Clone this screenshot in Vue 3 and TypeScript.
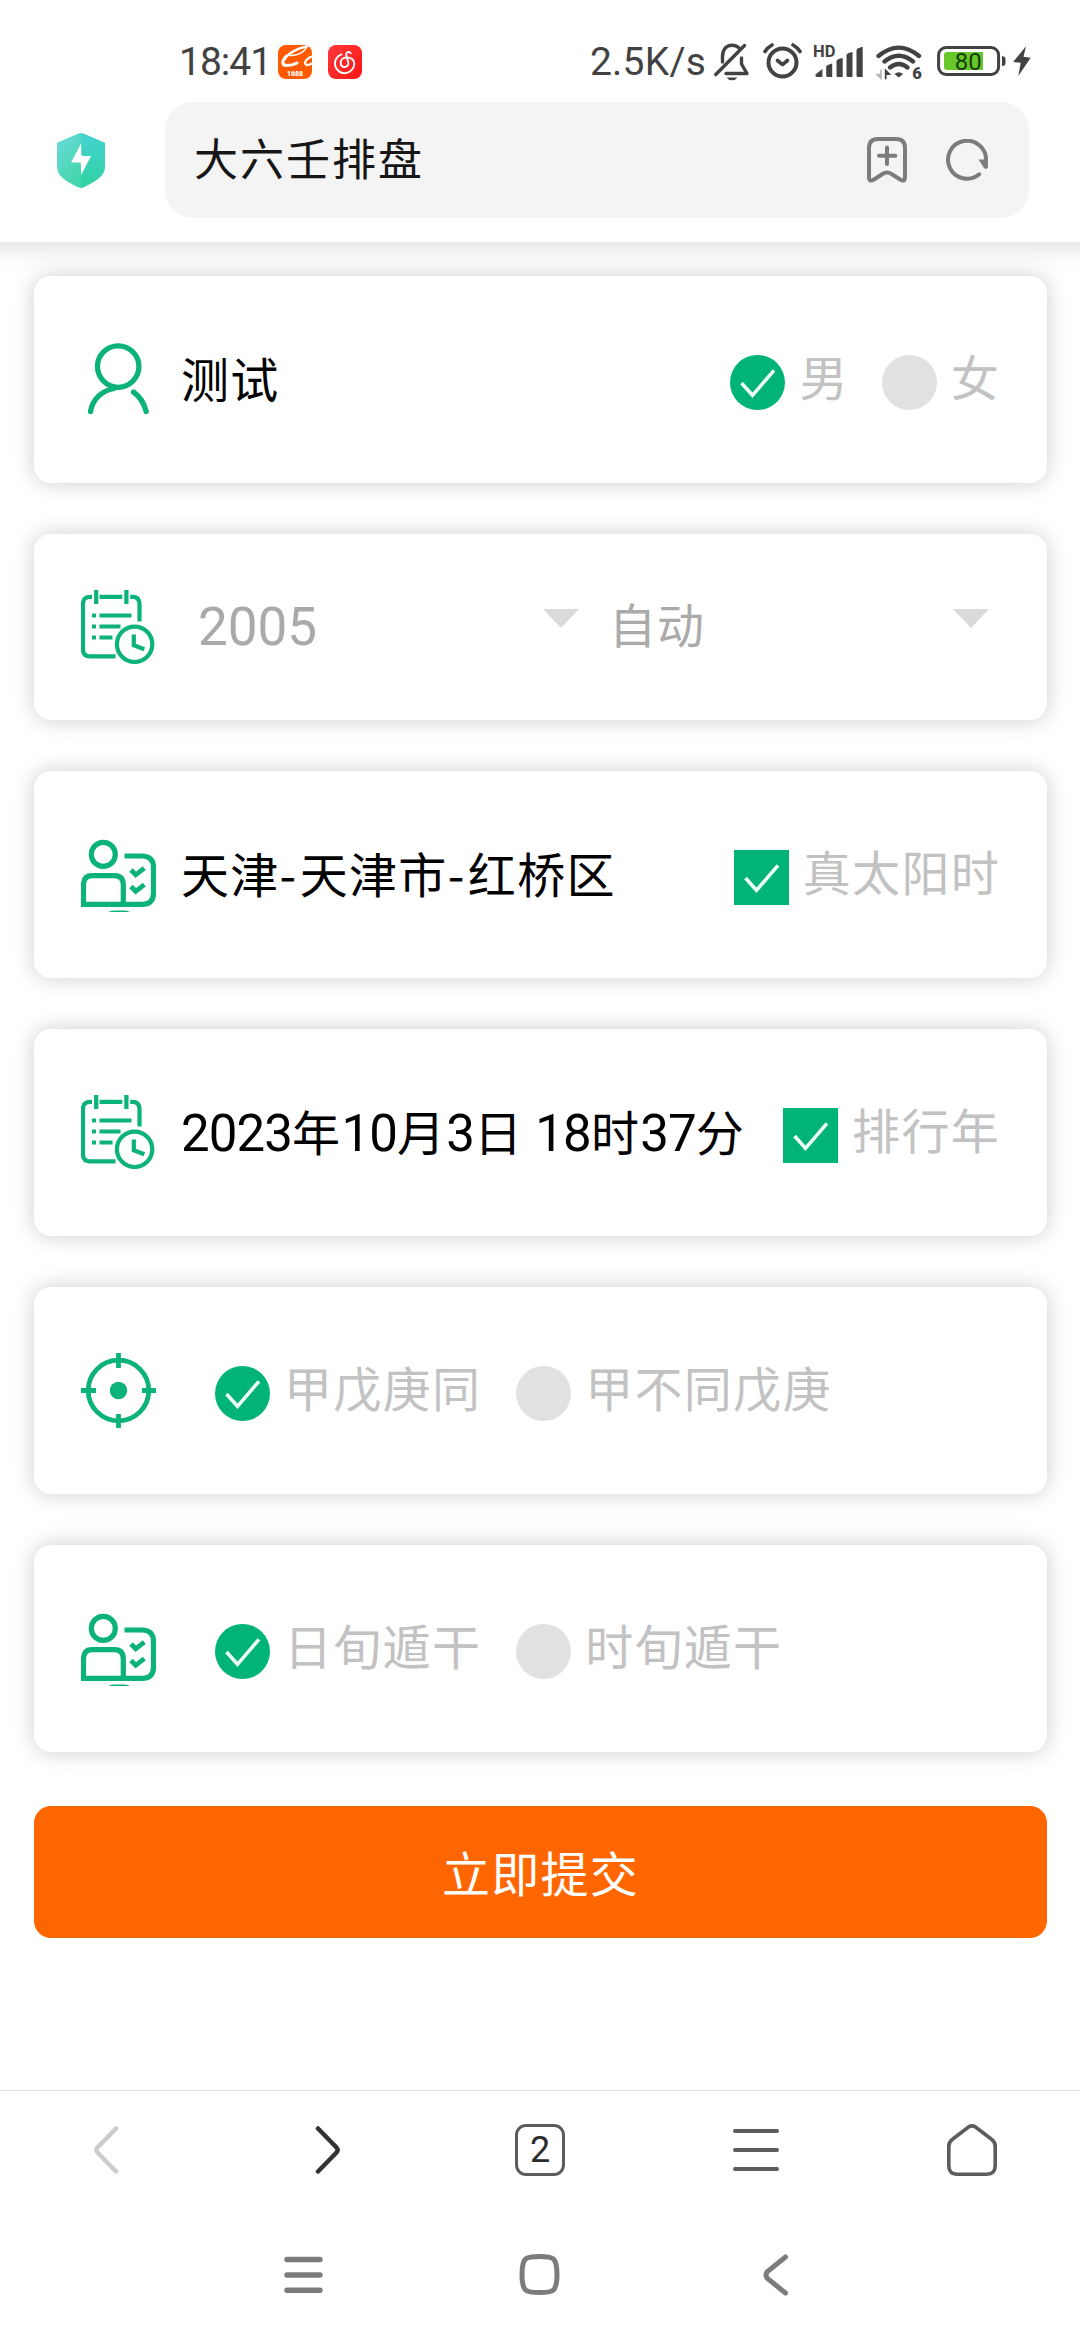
<script setup lang="ts">
import { ref } from 'vue'

type IconName = 'person' | 'calendar' | 'profile' | 'target'

interface Choice {
  label: string
  shape: 'round' | 'square'
  checked: boolean
}

interface Row {
  icon: IconName
  kind: 'value' | 'selects' | 'radios'
  value?: string
  choices: Choice[]
}

const rows = ref<Row[]>([
  {
    icon: 'person',
    kind: 'value',
    value: '测试',
    choices: [
      { label: '男', shape: 'round', checked: true },
      { label: '女', shape: 'round', checked: false },
    ],
  },
  { icon: 'calendar', kind: 'selects', choices: [] },
  {
    icon: 'profile',
    kind: 'value',
    value: '天津-天津市-红桥区',
    choices: [{ label: '真太阳时', shape: 'square', checked: true }],
  },
  {
    icon: 'calendar',
    kind: 'value',
    value: '2023年10月3日 18时37分',
    choices: [{ label: '排行年', shape: 'square', checked: true }],
  },
  {
    icon: 'target',
    kind: 'radios',
    choices: [
      { label: '甲戊庚同', shape: 'round', checked: true },
      { label: '甲不同戊庚', shape: 'round', checked: false },
    ],
  },
  {
    icon: 'profile',
    kind: 'radios',
    choices: [
      { label: '日旬遁干', shape: 'round', checked: true },
      { label: '时旬遁干', shape: 'round', checked: false },
    ],
  },
])

// Digits and hyphens are set in a Latin face, so a value is split into runs.
const runs = (value: string) =>
  (value.match(/[0-9]+|-|[^0-9-]+/g) ?? []).map((text) => ({
    text,
    digits: /^[0-9]/.test(text),
    hyphen: text === '-',
  }))

function pick(row: Row, choice: Choice) {
  if (choice.shape === 'square') {
    choice.checked = !choice.checked
    return
  }
  row.choices.forEach((c) => (c.checked = c === choice))
}
</script>

<template>
  <div class="screen">
    <header class="header">
      <div class="status">
        <div class="status-left">
          <span class="time">18:41</span>
          <svg class="app-1688" width="34" height="34" viewBox="0 0 34 34">
            <rect width="34" height="34" rx="8" fill="#ff5a00" />
            <path d="M29 1.5C20 2.500 9 9 6 15" fill="none" stroke="#fff" stroke-width="2.400" stroke-linecap="round" />
            <path d="M8.500 11C3.500 16 3.500 20.500 9 20.500C13 20.500 16.500 19.500 19 18" fill="none" stroke="#fff" stroke-width="3" stroke-linecap="round" />
            <path d="M12 10.500C18 11 26 8 28.500 2" fill="none" stroke="#fff" stroke-width="1.500" stroke-linecap="round" />
            <path d="M34 11.500C30 12.500 26 16.500 27.500 19C28.500 21 32 20 34 18" fill="none" stroke="#fff" stroke-width="2.200" />
            <text x="17" y="30.500" text-anchor="middle" font-size="7" font-weight="900" fill="#fff" font-family="Roboto, sans-serif">1688</text>
          </svg>
          <svg width="34" height="34" viewBox="0 0 34 34">
            <defs>
              <linearGradient id="music" x1="0" y1="0" x2="1" y2="1">
                <stop offset="0" stop-color="#fb3a3a" />
                <stop offset="1" stop-color="#ff1414" />
              </linearGradient>
            </defs>
            <rect width="34" height="34" rx="8" fill="url(#music)" />
            <path d="M13.500 9.300A9.700 9.700 0 1 0 26.300 18.500C26.300 14.500 22.500 12.200 18.500 12.400C14.800 12.600 12.700 15.300 12.700 18C12.700 20.500 14.500 22 16.700 22C19.300 22 20.800 20 20.300 17.500L18.200 10C17.800 7.300 20.200 6 22.800 8.200" fill="none" stroke="#fff" stroke-width="1.900" stroke-linecap="round" />
          </svg>
        </div>
        <div class="status-right">
          <span class="speed">2.5K/s</span>
          <svg class="s-bell" width="36" height="38" viewBox="0 0 36 38" fill="none" stroke="#424242" stroke-width="3.400" stroke-linecap="round" stroke-linejoin="round">
            <path d="M8.500 19V13.500C8.500 6.500 12.500 2.200 18 2.200C20.500 2.200 23 3 24.800 4.800" />
            <path d="M1.800 31.500L30.500 2.500" />
            <path d="M27.500 15V21L33 30.500H12" />
            <path d="M12.500 34.500H23.500Q21.500 37.300 18 37.300T12.500 34.500Z" fill="#424242" stroke="none" />
          </svg>
          <svg class="s-alarm" width="40" height="38" viewBox="0 0 40 38" fill="none" stroke="#424242" stroke-width="4" stroke-linecap="round" stroke-linejoin="round">
            <circle cx="19.500" cy="19.500" r="14" />
            <path d="M2 8.500Q4.500 4.500 9 2M37 8.500Q34.500 4.500 30 2" stroke-width="3.600" />
            <path d="M14.500 17.500L19.500 21.700L24.500 17.500" stroke-width="3.600" />
          </svg>
          <svg class="s-signal" width="51" height="42" viewBox="0 -2 51 42" fill="#424242">
            <text x="0" y="14.200" font-size="16.500" font-weight="700" font-family="Roboto, sans-serif">HD</text>
            <path d="M2.500 31.500L9.400 26V34H4Q2.500 34 2.500 32.500ZM13.200 23.500Q13.500 22 19.200 20.500V34H14.700Q13.200 34 13.200 32.500ZM23.500 18Q24 16 29.700 15V34H25Q23.500 34 23.500 32.500ZM33.500 12Q34 10 39.500 9V34H35Q33.500 34 33.500 32.500ZM43.500 7Q44 5 49.700 3.800V34H45Q43.500 34 43.500 32.500Z" />
          </svg>
          <svg class="s-wifi" width="48" height="46" viewBox="0 -4 48 46" fill="none" stroke="#424242" stroke-width="4.300" stroke-linecap="round">
            <path d="M2.500 13Q22.800 -3.800 43 13M8.500 18.500Q22.800 7 37 18.500M14 24.500Q22.800 17.500 31.500 24.500" />
            <path d="M18.500 31Q22.800 27.500 27 31L22.800 34.500Z" fill="#424242" stroke="none" />
            <path d="M5 27V35.500L.8 31.500H4" stroke="#b5b5b5" stroke-width="1.500" fill="#b5b5b5" />
            <path d="M9.700 35.500V27.500L13.200 31H10" stroke-width="1.800" fill="#424242" />
            <text x="36.300" y="36" font-size="16.500" font-weight="900" font-family="Roboto, sans-serif" fill="#424242" stroke="none">6</text>
          </svg>
          <svg class="s-battery" width="95" height="38" viewBox="0 0 95 38">
            <rect x="1.600" y="4.500" width="60" height="27" rx="7.500" fill="none" stroke="#424242" stroke-width="3" />
            <path d="M65 13Q68.500 13.500 68.500 16V20.500Q68.500 22.500 65 23Z" fill="#424242" />
            <path d="M10 9H46V27H10Q7 27 7 24V12Q7 9 10 9Z" fill="#66c82a" />
            <text x="31.200" y="26.500" text-anchor="middle" font-size="24" font-family="Roboto, sans-serif" fill="#173d06">80</text>
            <path d="M89 3.300L76.100 19L83.700 19.700L81.300 33L93.700 14.700L86.500 13.700Z" fill="#424242" />
          </svg>
        </div>
      </div>
      <div class="toolbar">
        <svg class="shield" width="48" height="55" viewBox="0 0 48 55">
          <defs>
            <linearGradient id="shieldLeft" x1="0" y1="0" x2="0.500" y2="1">
              <stop offset="0" stop-color="#6bdcdb" />
              <stop offset="1" stop-color="#45d5ac" />
            </linearGradient>
            <linearGradient id="shieldRight" x1="0" y1="0" x2="0" y2="1">
              <stop offset="0" stop-color="#45d3d3" />
              <stop offset="1" stop-color="#2fd2a0" />
            </linearGradient>
          </defs>
          <path d="M24 0Q22.500 0 21 .8L0 9.700V33.500C0 44 11 49 21 54.200Q22.500 55 24 55Z" fill="url(#shieldLeft)" />
          <path d="M24 0Q25.500 0 27 .8L48 9.700V33.500C48 44 37 49 27 54.200Q25.500 55 24 55Z" fill="url(#shieldRight)" />
          <path d="M24.200 10.300L14 29.500H23.700L24.200 42L34 23H26L24.200 22Z" fill="#fff" />
        </svg>
        <div class="address">
          <span class="title">大六壬排盘</span>
          <svg class="bookmark" width="40" height="46" viewBox="0 0 40 46" fill="none" stroke="#7c7c7c" stroke-width="4" stroke-linecap="round" stroke-linejoin="round">
            <path d="M2 40V11Q2 2 11 2H29Q38 2 38 11V40Q38 45.500 33.200 42.500L24.500 37Q20 34 15.500 37L7 42.500Q2 45.500 2 40Z" />
            <path d="M20 10.500V27M12 18.700H28.300" />
          </svg>
          <svg width="43" height="43" viewBox="0 0 43 43">
            <path d="M33.200 35.300A19 19 0 1 1 40 22" fill="none" stroke="#7c7c7c" stroke-width="4" stroke-linecap="round" />
            <path d="M32.500 20.500H42V28Q40.500 31.500 38 29Z" fill="#7c7c7c" />
          </svg>
        </div>
      </div>
    </header>

    <main class="form">
      <section v-for="(row, i) in rows" :key="i" class="card" :class="`card-${row.kind}`">
        <svg class="icon" width="75" height="75" viewBox="0 0 75 75" fill="none" stroke="#0bb27a" stroke-linecap="round">
          <g v-if="row.icon === 'person'" stroke-width="5.300">
            <circle cx="37.200" cy="24.600" r="20.700" />
            <path d="M9.500 69.500C11.500 57 21 48.500 33 46.500M52.500 50Q62 57 65.200 69.500" />
          </g>
          <g v-else-if="row.icon === 'calendar'" stroke-width="4.200" stroke-linecap="butt">
            <path d="M11 6.800H9.500Q2 6.800 2 14V59.500Q2 66.300 9 66.300H34.500M18.500 6.800H41.300M49.200 6.800H51.500Q58.500 6.800 58.500 14V31.500" />
            <path d="M15.200 0V14M45.400 0V14" />
            <path d="M18.500 25.500H50.500M18.500 36.500H39.500M18.500 47.500H31.500M11 25.500H15M11 36.500H15M11 47.500H15" />
            <circle cx="53.600" cy="54.300" r="17.700" />
            <path d="M52.800 44.500V55.300L63.300 59.200" />
          </g>
          <g v-else-if="row.icon === 'profile'" stroke-width="5.200" stroke-linecap="butt">
            <circle cx="22.300" cy="17.400" r="12" />
            <path d="M2.500 67.400V48Q2.500 38.700 11 38.700H33.500Q42.300 38.700 42.300 48V67.400" />
            <path d="M0 67.400H61Q72.500 67.400 72.500 56V30.500Q72.500 19 61 19H43.500" />
            <path d="M50 33L54.700 37.800L63.300 31.200M50 49.500L54.700 54.300L63.300 47.700" stroke-width="4.800" />
            <path d="M27.500 75Q29 73.500 33 73.500H43.500Q47.500 73.500 48.800 75Z" fill="#0bb27a" stroke="none" />
          </g>
          <g v-else stroke-width="4.800" stroke-linecap="butt">
            <circle cx="37.500" cy="37.500" r="30.300" />
            <path d="M37.500 0V15M37.500 61V75M0 37.500H15M61 37.500H75" />
            <circle cx="37.500" cy="37.500" r="8.700" fill="#0bb27a" stroke="none" />
          </g>
        </svg>

        <template v-if="row.kind === 'selects'">
          <div class="select select-year">
            <span class="latin">2005</span>
            <i class="caret"></i>
          </div>
          <div class="select select-mode">
            <span>自动</span>
            <i class="caret"></i>
          </div>
        </template>

        <span v-if="row.value" class="value"><span v-for="(run, k) in runs(row.value)" :key="k" :class="{ digits: run.digits, hyphen: run.hyphen }">{{ run.text }}</span></span>

        <div v-if="row.choices.length" class="choices">
          <div v-for="choice in row.choices" :key="choice.label" class="choice" @click="pick(row, choice)">
            <span class="mark" :class="[choice.shape, { on: choice.checked }]">
              <svg v-if="choice.checked" width="55" height="55" viewBox="0 0 55 55">
                <path d="M11.500 28L22.500 40.300L44 15.300" fill="none" stroke="#eefff8" stroke-width="3.600" />
              </svg>
            </span>
            <span class="label">{{ choice.label }}</span>
          </div>
        </div>
      </section>
      <button class="submit" type="button"><span>立即提交</span></button>
    </main>

    <nav class="browser-nav">
      <div class="cell">
        <svg class="nudge-left" width="26" height="50" viewBox="0 0 26 50" fill="none" stroke="#ccc" stroke-width="4.500" stroke-linecap="round">
          <path d="M23 3.500L4.500 22.500Q2.300 25 4.500 27.500L23 46.500" />
        </svg>
      </div>
      <div class="cell">
        <svg class="nudge-right" width="26" height="50" viewBox="0 0 26 50" fill="none" stroke="#333" stroke-width="4.500" stroke-linecap="round">
          <path d="M3 3.500L21.500 22.500Q23.700 25 21.500 27.500L3 46.500" />
        </svg>
      </div>
      <div class="cell"><span class="tabs">2</span></div>
      <div class="cell">
        <svg width="46" height="42" viewBox="0 0 46 42" stroke="#5c5c5c" stroke-width="4" stroke-linecap="round">
          <path d="M2 2H44M2 21H44M2 40H44" />
        </svg>
      </div>
      <div class="cell">
        <svg class="home" width="50" height="52" viewBox="0 0 50 52" fill="none" stroke="#5c5c5c" stroke-width="3.600">
          <path d="M21.500 3Q25 .8 28.500 3L44.500 15.300Q48.200 18 48.200 22V41.500Q48.200 50.200 40 50.200H10Q1.800 50.200 1.800 41.500V22Q1.800 18 5.500 15.300Z" />
        </svg>
      </div>
    </nav>

    <footer class="system-nav">
      <div class="cell">
        <svg width="39" height="38" viewBox="0 0 39 38" stroke="#7c7c7c" stroke-width="5.400" stroke-linecap="round">
          <path d="M3 3.500H36M3 19H36M3 34.300H36" />
        </svg>
      </div>
      <div class="cell">
        <svg width="41" height="41" viewBox="0 0 41 41" fill="none" stroke="#7c7c7c" stroke-width="5">
          <path d="M20.500 2.500C34 2.500 38 3 38 20.500S34 38.500 20.500 38.500S3 38 3 20.500S7 2.500 20.500 2.500Z" />
        </svg>
      </div>
      <div class="cell">
        <svg width="26" height="42" viewBox="0 0 26 42" fill="none" stroke="#7c7c7c" stroke-width="5" stroke-linecap="round">
          <path d="M22.500 3L4.500 17.500Q1.500 21 4.500 24.500L22.500 39" />
        </svg>
      </div>
    </footer>
  </div>
</template>

<style>
body {
  background: #fff;
}
</style>

<style scoped>
.screen {
  width: 1080px;
  height: 2340px;
  display: flex;
  flex-direction: column;
  background: #fff;
  overflow: hidden;
  font-family: 'Noto Sans CJK SC', sans-serif;
}

svg {
  display: block;
  flex: none;
}

.header {
  flex: none;
  height: 242px;
  background: #fff;
}

.status {
  height: 102px;
  box-sizing: border-box;
  padding: 43px 48px 0 179px;
  display: flex;
  justify-content: space-between;
  align-items: flex-start;
  color: #424242;
  font-family: Roboto, sans-serif;
}

.status-left,
.status-right {
  display: flex;
  align-items: center;
  height: 38px;
}

.time {
  width: 99px;
  font-size: 39px;
  letter-spacing: -1px;
}

.app-1688 {
  margin-right: 16px;
}

.speed {
  width: 124px;
  font-size: 39px;
  letter-spacing: 0.2px;
}

.s-bell {
  margin-right: 13px;
}

.s-alarm {
  margin-right: 10px;
}

.s-signal {
  margin-right: 12px;
}

.s-wifi {
  margin-right: 13px;
}

.toolbar {
  display: flex;
  align-items: center;
  height: 116px;
  padding: 0 51px 0 57px;
}

.address {
  flex: 1;
  height: 116px;
  margin-left: 60px;
  padding: 0 40px 0 29px;
  box-sizing: border-box;
  display: flex;
  align-items: center;
  border-radius: 28px;
  background: #f4f4f4;
}

.title {
  flex: 1;
  padding-bottom: 6px;
  font-size: 44px;
  letter-spacing: 2px;
  color: #161616;
}

.bookmark {
  margin-right: 39px;
}

.form {
  flex: 1;
  display: flex;
  flex-direction: column;
  gap: 51px;
  padding: 34px 33px 0 34px;
  background: linear-gradient(#e8e8e8, #f2f2f2 9px, #fcfcfc 20px, #fff 28px) no-repeat 0 0 / 100% 28px;
}

.card {
  flex: none;
  height: 207px;
  box-sizing: border-box;
  padding: 0 47px;
  display: flex;
  align-items: center;
  border-radius: 17px;
  background: #fff;
  box-shadow: 0 0 22px rgba(0, 0, 0, 0.2);
}

.card-selects {
  height: 186px;
}

.value {
  margin-left: 25px;
  padding-bottom: 6px;
  font-size: 48px;
  line-height: 60px;
  letter-spacing: 1.3px;
  white-space: nowrap;
  color: #000;
}

.digits {
  font-family: Roboto, sans-serif;
  font-size: 51px;
  line-height: 1;
  letter-spacing: -0.9px;
}

.hyphen {
  letter-spacing: 3.5px;
}

.choices {
  margin-left: auto;
  display: flex;
  gap: 33px;
}

.card-radios .choices {
  margin-left: 59px;
  gap: 35px;
}

.choice {
  display: flex;
  align-items: center;
  gap: 14px;
}

.mark {
  flex: none;
  width: 55px;
  height: 55px;
  margin-top: 6px;
  background: #e1e1e1;
}

.mark.round {
  border-radius: 50%;
}

.mark.on {
  background: #00b377;
}

.label {
  padding-bottom: 9px;
  font-size: 48px;
  line-height: 60px;
  letter-spacing: 1.3px;
  white-space: nowrap;
  color: #c2c2c2;
}

.select {
  display: flex;
  align-items: center;
  justify-content: space-between;
  font-size: 47px;
  line-height: 60px;
  letter-spacing: 1px;
  color: #aaa;
}

.select-year {
  width: 381px;
  margin-left: 42px;
}

.select-mode {
  width: 380px;
  margin-left: 30px;
}

.select span {
  padding-bottom: 9px;
}

.select .latin {
  padding-bottom: 0;
  font-family: Roboto, sans-serif;
  font-size: 53px;
  letter-spacing: 0;
}

.caret {
  margin-bottom: 18px;
  border: 18.5px solid transparent;
  border-top: 19px solid #dadada;
  border-bottom: 0;
}

.submit {
  flex: none;
  height: 132px;
  margin-top: 3px;
  padding: 0 0 3px;
  border: 0;
  border-radius: 17px;
  background: #ff6600;
  color: #fff;
  font-family: inherit;
  font-size: 48px;
  letter-spacing: 1.3px;
}

.browser-nav {
  flex: none;
  height: 118px;
  border-top: 1px solid #e2e2e2;
  display: flex;
  background: #fff;
}

.browser-nav .cell {
  flex: 1;
  display: flex;
  justify-content: center;
  align-items: center;
}

.nudge-left {
  margin-right: 4px;
}

.nudge-right {
  margin-left: 8px;
}

.tabs {
  width: 50px;
  height: 52px;
  box-sizing: border-box;
  border: 3.500px solid #5c5c5c;
  border-radius: 11px;
  text-align: center;
  font-family: Roboto, sans-serif;
  font-size: 36px;
  line-height: 46px;
  color: #2c2c2c;
}

.system-nav {
  flex: none;
  height: 131px;
  padding: 0 186px 0 185px;
  display: flex;
  background: #fff;
}

.system-nav .cell {
  flex: 1;
  display: flex;
  justify-content: center;
  align-items: center;
}
</style>
